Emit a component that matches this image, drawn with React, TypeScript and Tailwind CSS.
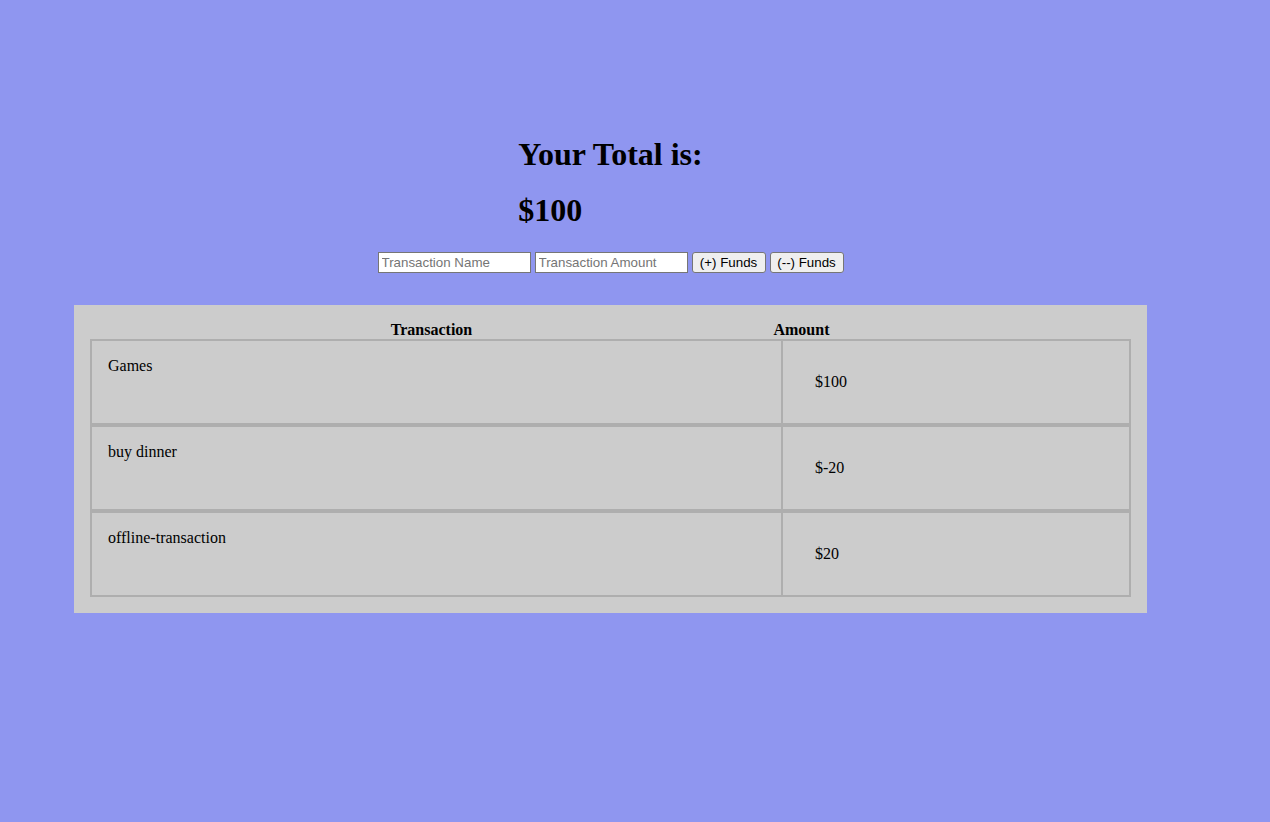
const transactions = [
  { name: "Games", amount: "$100" },
  { name: "buy dinner", amount: "$-20" },
  { name: "offline-transaction", amount: "$20" },
];

function TransactionRow({ name, amount }: { name: string; amount: string }) {
  return (
    <div className="flex h-[86px] border-2 border-[#aeaeae]">
      <div className="w-[691px] border-r-2 border-[#aeaeae] pl-4 pt-4 leading-[18px]">{name}</div>
      <div className="flex flex-1 items-center pl-8 leading-[18px]">{amount}</div>
    </div>
  );
}

export default function App() {
  return (
    <div className="min-h-screen w-full bg-[#8f96f0] font-['Liberation_Serif',serif] text-base text-black">
      <div className="flex w-[1221px] flex-col items-center pt-[136px]">
        {/* total */}
        <div className="flex flex-col gap-[20px]">
          <h1 className="text-[32px] font-bold leading-[36px]">Your Total is:</h1>
          <h1 className="text-[32px] font-bold leading-[36px]">$100</h1>
        </div>

        {/* form */}
        <div className="mt-6 flex gap-1 font-['Liberation_Sans',Arial,sans-serif] text-[13.33px]">
          <input
            className="h-[21px] w-[153px] border border-[#767676] bg-white px-[3px] placeholder:text-[#757575]"
            placeholder="Transaction Name"
          />
          <input
            className="h-[21px] w-[153px] border border-[#767676] bg-white px-[3px] placeholder:text-[#757575]"
            placeholder="Transaction Amount"
          />
          <button className="h-[21px] w-[74px] rounded-[3px] border border-[#767676] bg-[#efefef]">(+) Funds</button>
          <button className="h-[21px] w-[74px] rounded-[3px] border border-[#767676] bg-[#efefef]">(--) Funds</button>
        </div>

        {/* table */}
        <div className="mt-8 w-[1073px] bg-[#cccccc] p-4">
          <div className="grid h-[18px] grid-cols-[683px_57px] text-center font-bold leading-[18px]">
            <div>Transaction</div>
            <div>Amount</div>
          </div>
          {transactions.map((t) => (
            <TransactionRow key={t.name} name={t.name} amount={t.amount} />
          ))}
        </div>
      </div>
    </div>
  );
}
